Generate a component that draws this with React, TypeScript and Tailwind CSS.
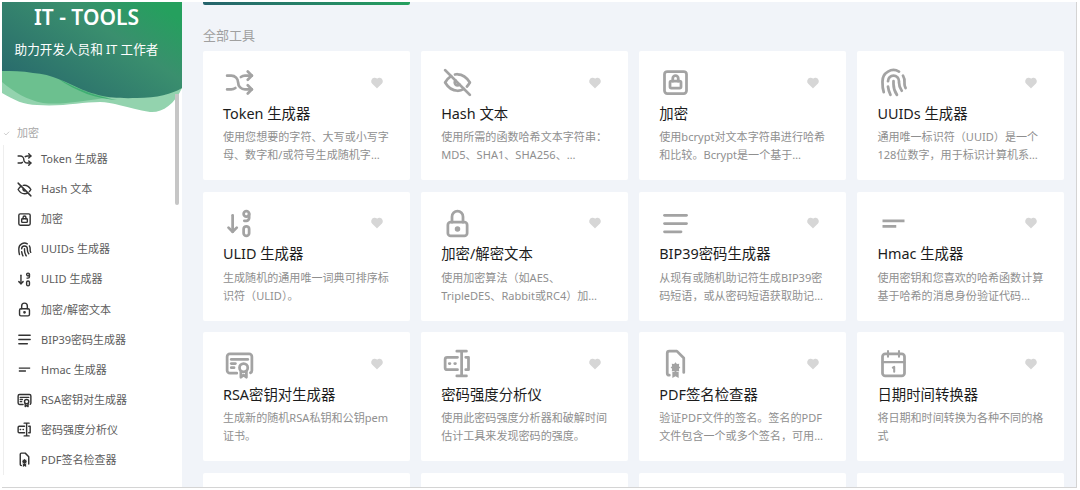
import type { ReactNode } from "react";
import {
  TbArrowsShuffle,
  TbEyeOff,
  TbLockSquare,
  TbFingerprint,
  TbSortDescendingNumbers,
  TbLock,
  TbAlignJustified,
  TbCertificate,
  TbHeartFilled,
  TbCheck,
} from "react-icons/tb";
import { MdShortText } from "react-icons/md";

const font = "font-['Noto_Sans','Noto_Sans_CJK_SC',sans-serif]";

function CalendarIcon({ size }: { size: number }) {
  return (
    <svg width={size} height={size} viewBox="0 0 24 24" fill="none" stroke="currentColor" strokeWidth="2" strokeLinecap="round" strokeLinejoin="round">
      <rect x="4" y="5" width="16" height="16" rx="2" />
      <path d="M16 3v4M8 3v4M4 11h16M11.5 15l1-.5v3.5" strokeWidth="1.5" />
    </svg>
  );
}

function FileBadgeIcon({ size }: { size: number }) {
  return (
    <svg width={size} height={size} viewBox="0 0 24 24" fill="none" stroke="currentColor" strokeWidth="2" strokeLinecap="round" strokeLinejoin="round">
      <path d="M7.5 20.5H7.5a1.5 1.5 0 0 1-1.5-1.5V4.5A1.5 1.5 0 0 1 7.5 3H13l5 5v10.5" />
      <path d="M12 11l1 1.4 1.7-.2-.2 1.8 1 .9-1 .9.2 1.8-1.7-.2-1 1.4-1-1.4-1.7.2.2-1.8-1-.9 1-.9-.2-1.8 1.7.2z" fill="currentColor" stroke="none" />
      <path d="M9.7 18h4.6v4.5l-2.3-1.3-2.3 1.3z" fill="currentColor" stroke="none" />
    </svg>
  );
}

function PasswordIcon({ size }: { size: number }) {
  return (
    <svg width={size} height={size} viewBox="0 0 24 24" fill="none" stroke="currentColor" strokeWidth="2" strokeLinecap="round" strokeLinejoin="round">
      <path d="M11.5 3h7M15 3v18M11.5 21h7" />
      <path d="M12 7.5H4.5A1.5 1.5 0 0 0 3 9v6a1.5 1.5 0 0 0 1.5 1.5H12" />
      <path d="M18 7.5h2v9h-2" />
      <path d="M6 12h.5M10 12h.5" />
    </svg>
  );
}

type Tool = {
  name: string;
  desc: string;
  icon: (size: number) => ReactNode;
};

const tools: Tool[] = [
  {
    name: "Token 生成器",
    desc: "使用您想要的字符、大写或小写字母、数字和/或符号生成随机字符串，长度和内容都可以自行设置。",
    icon: (s) => <TbArrowsShuffle size={s} />,
  },
  {
    name: "Hash 文本",
    desc: "使用所需的函数哈希文本字符串：MD5、SHA1、SHA256、SHA224、SHA512、SHA384、SHA3或RIPEMD160。",
    icon: (s) => <TbEyeOff size={s} />,
  },
  {
    name: "加密",
    desc: "使用bcrypt对文本字符串进行哈希和比较。Bcrypt是一个基于Blowfish密码的密码哈希函数。",
    icon: (s) => <TbLockSquare size={s} />,
  },
  {
    name: "UUIDs 生成器",
    desc: "通用唯一标识符（UUID）是一个128位数字，用于标识计算机系统中的信息。",
    icon: (s) => <TbFingerprint size={s} />,
  },
  {
    name: "ULID 生成器",
    desc: "生成随机的通用唯一词典可排序标识符（ULID）。",
    icon: (s) => <TbSortDescendingNumbers size={s} />,
  },
  {
    name: "加密/解密文本",
    desc: "使用加密算法（如AES、TripleDES、Rabbit或RC4）加密和解密文本明文。",
    icon: (s) => <TbLock size={s} />,
  },
  {
    name: "BIP39密码生成器",
    desc: "从现有或随机助记符生成BIP39密码短语，或从密码短语获取助记符。",
    icon: (s) => <TbAlignJustified size={s} />,
  },
  {
    name: "Hmac 生成器",
    desc: "使用密钥和您喜欢的哈希函数计算基于哈希的消息身份验证代码（HMAC）。",
    icon: (s) => <MdShortText size={s} />,
  },
  {
    name: "RSA密钥对生成器",
    desc: "生成新的随机RSA私钥和公钥pem证书。",
    icon: (s) => <TbCertificate size={s} />,
  },
  {
    name: "密码强度分析仪",
    desc: "使用此密码强度分析器和破解时间估计工具来发现密码的强度。",
    icon: (s) => <PasswordIcon size={s} />,
  },
  {
    name: "PDF签名检查器",
    desc: "验证PDF文件的签名。签名的PDF文件包含一个或多个签名，可用于确定文件的内容是否已被更改。",
    icon: (s) => <FileBadgeIcon size={s} />,
  },
  {
    name: "日期时间转换器",
    desc: "将日期和时间转换为各种不同的格式",
    icon: (s) => <CalendarIcon size={s} />,
  },
];

function Hero() {
  return (
    <div className="relative h-[112px] pr-[11px] text-center text-white">
      <svg className="absolute inset-0" width="180" height="112" viewBox="0 0 180 112">
        <defs>
          <linearGradient id="hero" x1="0" y1="1" x2="1" y2="0.2">
            <stop offset="0" stopColor="#25636c" />
            <stop offset="0.7" stopColor="#3a8f6e" />
            <stop offset="1" stopColor="#25a05e" />
          </linearGradient>
        </defs>
        <path d="M0 69V91C12 98 22 103 35 103C60 105 80 100 98 100C110 100 125 106 148 110C160 111 172 103 180 86V69Z" fill="#93d3ae" />
        <path d="M0 69V80C12 90 25 98 41 101C60 103 80 99 110 95V69Z" fill="#6cc08f" />
        <path d="M55 76C70 84 90 94 115 98C95 97 75 90 55 76Z" fill="#3fae72" />
        <path d="M0 0H180V86C170 92 155 96 135 96C105 97 95 93 81 88C65 81 50 72 31 71C20 69 10 69 0 69Z" fill="url(#hero)" />
      </svg>
      <div className="relative text-[21px] leading-[30px] font-semibold">IT - TOOLS</div>
      <div className="relative mt-[2px] text-[12.6px] leading-[32px]">助力开发人员和 IT 工作者</div>
    </div>
  );
}

function Sidebar() {
  return (
    <aside className="relative w-[180px] shrink-0 overflow-hidden bg-white">
      <Hero />
      <div className="relative mt-[8.5px] flex h-[22px] items-center pl-[1px] text-[11px] text-[#a8a8a8]">
        <TbCheck size={7} className="mr-[7px]" />
        <span>加密</span>
      </div>
      <nav className="ml-[1px] border-l border-[#eeeeee]">
        {tools.slice(0, 11).map((t) => (
          <div key={t.name} className="flex h-[30.05px] items-center pl-[12px] text-[#333333]">
            <span className="flex w-[17px] justify-center">{t.icon(17)}</span>
            <span className="ml-[8px] text-[11px] text-[#5c5c5c]">{t.name}</span>
          </div>
        ))}
      </nav>
      <div className="absolute right-[3px] top-[92px] h-[111px] w-[4px] rounded-b-full bg-[#c6c6c6]" />
    </aside>
  );
}

function ToolCard({ tool }: { tool: Tool }) {
  return (
    <div className="h-[129px] rounded-[2px] bg-white px-[20px] pt-[15px]">
      <div className="flex items-center justify-between">
        <span className="text-[#a3a3a3]">{tool.icon(33)}</span>
        <TbHeartFilled size={14} className="mr-[6px] text-[#d6d6d6]" />
      </div>
      <div className="mt-[4.5px] text-[14.4px] leading-[20px] text-[#1c1c1c]">{tool.name}</div>
      <p className="mt-[4.5px] line-clamp-2 text-[11.07px] leading-[18px] text-[#8f8f8f]">{tool.desc}</p>
    </div>
  );
}

export default function App() {
  return (
    <div className={`h-[490px] w-[1080px] overflow-hidden bg-white pb-[2px] pl-[2px] pr-[3px] pt-[2px] ${font}`}>
      <div className="flex h-full border-b border-r border-[#d4d4d4]">
        <Sidebar />
        <main className="min-w-0 flex-1 overflow-hidden bg-[#f1f4f9] pl-[21px] pr-[12px]">
          <div className="h-[3px] w-[207px] rounded-b-[2px] bg-gradient-to-r from-[#25636c] to-[#25a05e]" />
          <h2 className="mt-[20px] text-[13px] leading-[20px] text-[#a0a0a0]">全部工具</h2>
          <div className="mt-[6px] grid grid-cols-4 gap-x-[11.5px] gap-y-[11.6px]">
            {tools.map((t) => (
              <ToolCard key={t.name} tool={t} />
            ))}
            <div className="h-[129px] rounded-[2px] bg-white" />
            <div className="h-[129px] rounded-[2px] bg-white" />
            <div className="h-[129px] rounded-[2px] bg-white" />
            <div className="h-[129px] rounded-[2px] bg-white" />
          </div>
        </main>
      </div>
    </div>
  );
}
